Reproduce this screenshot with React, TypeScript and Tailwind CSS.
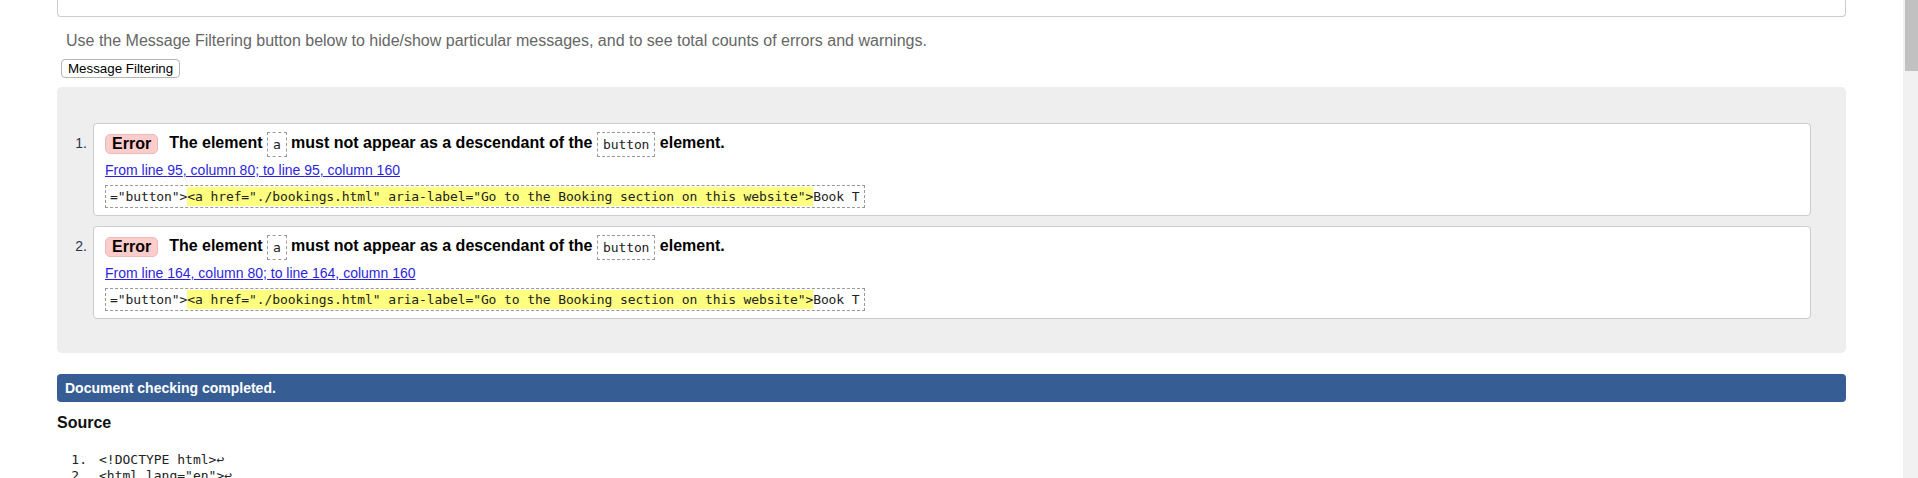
const sans = "font-['Liberation_Sans',Arial,sans-serif]";
const mono = "font-['DejaVu_Sans_Mono','Liberation_Mono',monospace]";

interface ValidatorMessage {
  line: number;
}

const messages: ValidatorMessage[] = [{ line: 95 }, { line: 164 }];

function CodeTag({ children }: { children: string }) {
  return (
    <code
      className={`${mono} inline-block align-middle border border-dashed border-[#999] px-[5px] py-[3px] text-[13px] tracking-[-0.1px] leading-[17px] font-normal text-[#222]`}
    >
      {children}
    </code>
  );
}

function MessageCard({ index, line }: { index: number; line: number }) {
  return (
    <li className="flex">
      <div className={`${sans} w-[36px] shrink-0 pr-[6px] mt-[8px] h-[25px] flex items-center justify-end text-[14px] text-[#2b3550]`}>
        {index}.
      </div>
      <div className="flex-1 bg-white border border-[#ccc] rounded-[4px] pt-[7px] pb-[7px] pl-[11px] pr-[11px]">
        <div className={`${sans} h-[25px] flex items-center`}>
          <span className="h-[20px] px-[6px] flex items-center bg-[#ffcccc] border border-[#eebbbb] rounded-[5px] text-[16px] font-bold text-black">
            Error
          </span>
          <p className="ml-[11px] text-[16px] font-bold text-black leading-[25px]">
            The element <CodeTag>a</CodeTag> must not appear as a descendant of the <CodeTag>button</CodeTag> element.
          </p>
        </div>
        <div className={`${sans} mt-[6px] text-[14px] leading-[16px]`}>
          <a href="#" className="text-[#2d1fe0] underline">
            From line {line}, column 80; to line {line}, column 160
          </a>
        </div>
        <div
          className={`${mono} mt-[7px] inline-flex items-center h-[23px] border border-dashed border-[#999] px-[4px] text-[13px] tracking-[-0.1px] text-[#222] whitespace-pre`}
        >
          <span>="button"&gt;</span>
          <span className="bg-[#ffff80]">&lt;a href="./bookings.html" aria-label="Go to the Booking section on this website"&gt;</span>
          <span>Book T</span>
        </div>
      </div>
    </li>
  );
}

export default function App() {
  return (
    <div className="flex h-[478px] w-full overflow-hidden bg-white">
      <main className="flex-1 px-[57px]">
        {/* tail of the box above */}
        <div className="h-[17px] bg-white border-x border-b border-[#ccc] rounded-b-[4px]" />

        <p className={`${sans} mt-[15px] pl-[9px] text-[16px] leading-[18px] text-[#666]`}>
          Use the Message Filtering button below to hide/show particular messages, and to see total counts of errors and warnings.
        </p>
        <div className="mt-[9px] pl-[4px] flex">
          <button className={`${sans} h-[19px] px-[6px] bg-white border border-[#b5b5b5] rounded-[4px] text-[13.33px] leading-[17px] text-black`}>
            Message Filtering
          </button>
        </div>

        <section className="mt-[9px] bg-[#eeeeee] rounded-[5px] pt-[36px] pb-[34px] pr-[35px]">
          <ol className="flex flex-col gap-[10px]">
            {messages.map((m, i) => (
              <MessageCard key={i} index={i + 1} line={m.line} />
            ))}
          </ol>
        </section>

        <div className={`${sans} mt-[21px] h-[28px] flex items-center pl-[8px] bg-[#365d94] rounded-[4px] text-[14px] leading-[16px] font-bold text-white`}>
          Document checking completed.
        </div>

        <h3 className={`${sans} mt-[12px] text-[16px] leading-[18px] font-bold text-[#111]`}>Source</h3>

        <ol className={`${mono} mt-[20px] text-[13px] leading-[16px] text-[#222]`}>
          <li className="flex gap-[12px]">
            <span className="w-[30px] text-right">1.</span>
            <span className="whitespace-pre">&lt;!DOCTYPE html&gt;↩</span>
          </li>
          <li className="flex gap-[12px]">
            <span className="w-[30px] text-right">2.</span>
            <span className="whitespace-pre">&lt;html lang="en"&gt;↩</span>
          </li>
        </ol>
      </main>

      {/* window scrollbar */}
      <div className="w-[15px] shrink-0 bg-[#f1f1f1]">
        <div className="ml-[2px] h-[71px] bg-[#c1c1c1]" />
      </div>
    </div>
  );
}
